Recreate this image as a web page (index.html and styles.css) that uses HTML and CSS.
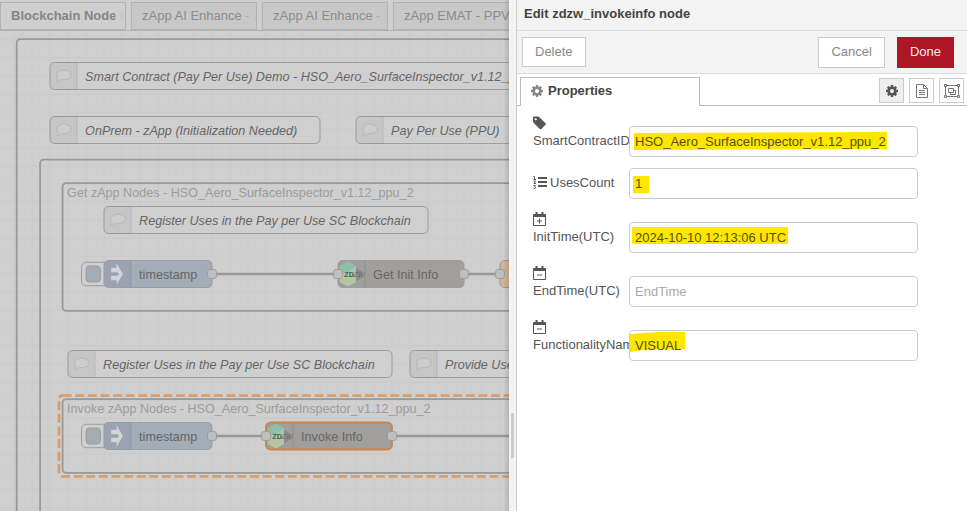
FILE: index.html
```html
<!DOCTYPE html>
<html lang="en">
<head>
<meta charset="utf-8">
<title>Flow editor</title>
<link rel="stylesheet" href="styles.css">
</head>
<body>
<svg class="defs" aria-hidden="true">
  <defs>
    <pattern id="grid" width="20" height="20" patternUnits="userSpaceOnUse">
      <path class="grid-line" d="M0 0V20M20 0V20M0 0H20M0 20H20"/>
    </pattern>
    <symbol id="bubble" viewBox="0 0 30 30" width="30" height="30">
      <path class="bubble" d="M15.500 8.500c4.500 0 8 2.300 8 5.300s-3.500 5.200-8 5.200c-1 0-1.900-.1-2.800-.3-1.500 1.500-3.400 2.500-5.700 2.800 1-1 1.900-2.100 2-3.800-1-1-1.500-2.400-1.500-3.900 0-3 3.500-5.300 8-5.300z"/>
    </symbol>
    <symbol id="inject" viewBox="0 0 30 30" width="30" height="30">
      <path class="arrow" d="M8 8h6V3l7 12-7 12v-5H8v-5h7l2-2-2-2H8z"/>
    </symbol>
    <symbol id="zdzw" viewBox="0 0 30 30" width="30" height="30">
      <path fill="#8d8b8c" d="M19 8l8 4v7l-8 5z"/>
      <path fill="#8fc0a6" d="M11 1l9 5v8L2 16V6z"/>
      <path fill="#a5c9b0" d="M20 6v11l-9-4z"/>
      <path fill="#b4c7a0" d="M2 16l9-3 9 4v7l-9 5-9-5z"/>
      <text class="logo-text" x="7" y="18">ZD</text>
      <text class="logo-text logo-dim" x="17" y="18">ZW</text>
    </symbol>
    <symbol id="cog" viewBox="0 -128 1536 1536">
      <path d="M1024 640q0-106-75-181t-181-75-181 75-75 181 75 181 181 75 181-75 75-181zm512-109v222q0 12-8 23t-20 13l-185 28q-19 54-39 91 35 50 107 138 10 12 10 25t-9 23q-27 37-99 108t-94 71q-12 0-26-9l-138-108q-44 23-91 38-16 136-29 186-7 28-36 28h-222q-14 0-24.500-8.500t-11.500-21.500l-28-184q-49-16-90-37l-141 107q-10 9-25 9-14 0-25-11-126-114-165-168-7-10-7-23 0-12 8-23 15-21 51-66.500t54-70.500q-27-50-41-99l-183-27q-13-2-21-12.500t-8-23.500v-222q0-12 8-23t19-13l186-28q14-46 39-92-40-57-107-138-10-12-10-24 0-10 9-23 26-36 98.500-107.500t94.500-71.500q13 0 26 10l138 107q44-23 91-38 16-136 29-186 7-28 36-28h222q14 0 24.500 8.500t11.500 21.500l28 184q49 16 90 37l142-107q9-9 24-9 13 0 25 10 129 119 165 170 7 8 7 22 0 12-8 23-15 21-51 66.500t-54 70.500q26 50 41 98l183 28q13 2 21 12.500t8 23.500z"/>
    </symbol>
    <symbol id="tag" viewBox="0 0 1536 1536">
      <path d="M448 320q0-53-37.500-90.500t-90.500-37.500-90.500 37.500-37.500 90.500 37.500 90.500 90.500 37.500 90.500-37.500 37.500-90.500zm1067 576q0 53-37 90l-491 492q-39 37-91 37-53 0-90-37l-715-716q-38-37-64.500-101t-26.500-117v-416q0-52 38-90t90-38h416q53 0 117 26.500t102 64.500l715 714q37 39 37 91z"/>
    </symbol>
    <symbol id="list" viewBox="0 0 14 14">
      <path d="M5 2h9v2H5zM5 6h9v2H5zM5 10h9v2H5z"/>
      <path class="thin" d="M0.500 1.500H1.500V4M0.500 4.500H3M0.500 6H2.500L1 8.500H3M0.500 10.500H2.500L1.500 11.500Q3 12 2.500 13T0.500 13"/>
    </symbol>
    <symbol id="calendar" viewBox="0 0 13 14">
      <path d="M1 2h1.500V0h2v2h4V0h2v2H12q1 0 1 1v10q0 1-1 1H1q-1 0-1-1V3q0-1 1-1zM1 5v8h11V5z"/>
      <path d="M4 8.500h5v1H4z"/>
    </symbol>
    <symbol id="plus-bar" viewBox="0 0 13 14"><path d="M6 6.500h1v5H6z"/></symbol>
    <symbol id="file" viewBox="0 0 12 14">
      <path class="thin" d="M0.500 0.500H7.500L11.500 4.500V13.500H0.500zM7.500 0.500V4.500H11.500M3 6.500H9M3 8.500H9M3 10.500H9"/>
    </symbol>
    <symbol id="group" viewBox="0 0 16 14">
      <path class="thin" d="M1.500 1.500H14.500V12.500H1.500zM4.500 4.500H9.500V8.500H4.500zM9.500 6.500H11.500V10.500H6.500V8.500"/>
      <path class="corner" d="M0.500 0.500h2v2h-2zM13.500 0.500h2v2h-2zM0.500 11.500h2v2h-2zM13.500 11.500h2v2h-2z"/>
    </symbol>
  </defs>
</svg>

<main class="workspace">
  <nav class="flow-tabs" aria-label="Flows">
    <a class="flow-tab active" href="#flow1">Blockchain Node E</a>
    <a class="flow-tab" href="#flow2">zApp AI Enhance - P</a>
    <a class="flow-tab" href="#flow3">zApp AI Enhance - P</a>
    <a class="flow-tab" href="#flow4">zApp EMAT - PPV</a>
  </nav>
  <svg class="canvas" role="img" aria-label="Flow canvas">
    <g transform="translate(14 9) scale(0.900)">
      <rect x="-20" y="-20" width="2000" height="2000" fill="url(#grid)"/>

      <rect class="group" x="3" y="-1" width="1200" height="1200" rx="4"/>
      <rect class="group" x="29" y="133" width="1100" height="1000" rx="4"/>
      <rect class="group" x="54" y="159" width="1000" height="142" rx="4"/>
      <rect class="selection" x="50" y="395" width="1008" height="90" rx="4"/>
      <rect class="group" x="54" y="399" width="1000" height="82" rx="4"/>
      <text class="group-title" x="59" y="174">Get zApp Nodes - HSO_Aero_SurfaceInspector_v1.12_ppu_2</text>
      <text class="group-title" x="59" y="414">Invoke zApp Nodes - HSO_Aero_SurfaceInspector_v1.12_ppu_2</text>

      <path class="wire" d="M220 260H360M500 260H540M220 440H280M420 440H700"/>

      <g transform="translate(40 25)">
        <rect class="node comment" width="560" height="30" rx="5"/>
        <path class="icon-area" d="M5 0H30V30H5Q0 30 0 25V5Q0 0 5 0"/><path class="divider" d="M30 0V30"/>
        <use href="#bubble"/>
        <text class="comment-text" x="39" y="20">Smart Contract (Pay Per Use) Demo - HSO_Aero_SurfaceInspector_v1.12_ppu_2</text>
      </g>
      <g transform="translate(40 85)">
        <rect class="node comment" width="300" height="30" rx="5"/>
        <path class="icon-area" d="M5 0H30V30H5Q0 30 0 25V5Q0 0 5 0"/><path class="divider" d="M30 0V30"/>
        <use href="#bubble"/>
        <text class="comment-text" x="39" y="20">OnPrem - zApp (Initialization Needed)</text>
      </g>
      <g transform="translate(380 85)">
        <rect class="node comment" width="240" height="30" rx="5"/>
        <path class="icon-area" d="M5 0H30V30H5Q0 30 0 25V5Q0 0 5 0"/><path class="divider" d="M30 0V30"/>
        <use href="#bubble"/>
        <text class="comment-text" x="39" y="20">Pay Per Use (PPU)</text>
      </g>
      <g transform="translate(100 185)">
        <rect class="node comment" width="360" height="30" rx="5"/>
        <path class="icon-area" d="M5 0H30V30H5Q0 30 0 25V5Q0 0 5 0"/><path class="divider" d="M30 0V30"/>
        <use href="#bubble"/>
        <text class="comment-text" x="39" y="20">Register Uses in the Pay per Use SC Blockchain</text>
      </g>
      <g transform="translate(60 345)">
        <rect class="node comment" width="360" height="30" rx="5"/>
        <path class="icon-area" d="M5 0H30V30H5Q0 30 0 25V5Q0 0 5 0"/><path class="divider" d="M30 0V30"/>
        <use href="#bubble"/>
        <text class="comment-text" x="39" y="20">Register Uses in the Pay per Use SC Blockchain</text>
      </g>
      <g transform="translate(440 345)">
        <rect class="node comment" width="300" height="30" rx="5"/>
        <path class="icon-area" d="M5 0H30V30H5Q0 30 0 25V5Q0 0 5 0"/><path class="divider" d="M30 0V30"/>
        <use href="#bubble"/>
        <text class="comment-text" x="39" y="20">Provide Use</text>
      </g>

      <g transform="translate(100 245)">
        <rect class="node comment" x="-25" y="2" width="32" height="26" rx="5"/>
        <rect class="node inject" x="-20" y="6" width="16" height="18" rx="4"/>
        <rect class="node inject" width="120" height="30" rx="5"/>
        <path class="icon-area inject-area" d="M5 0H30V30H5Q0 30 0 25V5Q0 0 5 0"/><path class="divider" d="M30 0V30"/>
        <use href="#inject"/>
        <text class="node-text" x="39" y="20">timestamp</text>
        <rect class="port" x="115" y="10" width="10" height="10" rx="3"/>
      </g>
      <g transform="translate(100 425)">
        <rect class="node comment" x="-25" y="2" width="32" height="26" rx="5"/>
        <rect class="node inject" x="-20" y="6" width="16" height="18" rx="4"/>
        <rect class="node inject" width="120" height="30" rx="5"/>
        <path class="icon-area inject-area" d="M5 0H30V30H5Q0 30 0 25V5Q0 0 5 0"/><path class="divider" d="M30 0V30"/>
        <use href="#inject"/>
        <text class="node-text" x="39" y="20">timestamp</text>
        <rect class="port" x="115" y="10" width="10" height="10" rx="3"/>
      </g>
      <g transform="translate(360 245)">
        <rect class="node info" width="140" height="30" rx="5"/>
        <path class="divider" d="M30 0V30"/>
        <use href="#zdzw"/>
        <text class="node-text" x="39" y="20">Get Init Info</text>
        <rect class="port" x="-5" y="10" width="10" height="10" rx="3"/>
        <rect class="port" x="135" y="10" width="10" height="10" rx="3"/>
      </g>
      <g transform="translate(280 425)">
        <rect class="node info" width="140" height="30" rx="5"/>
        <path class="divider" d="M30 0V30"/>
        <use href="#zdzw"/>
        <rect class="selected" width="140" height="30" rx="5"/>
        <text class="node-text" x="39" y="20">Invoke Info</text>
        <rect class="port" x="-5" y="10" width="10" height="10" rx="3"/>
        <rect class="port" x="135" y="10" width="10" height="10" rx="3"/>
      </g>
      <g transform="translate(540 245)">
        <rect class="node function" width="120" height="30" rx="5"/>
        <rect class="port" x="-5" y="10" width="10" height="10" rx="3"/>
      </g>
    </g>
  </svg>
</main>

<div class="separator"><span class="grip"></span></div>

<aside class="tray">
  <h1 class="tray-title">Edit zdzw_invokeinfo node</h1>
  <div class="toolbar">
    <button class="btn" type="button">Delete</button>
    <span class="spacer"></span>
    <button class="btn large" type="button">Cancel</button>
    <button class="btn large primary" type="button">Done</button>
  </div>
  <div class="tray-tabs">
    <a class="tray-tab" href="#properties"><svg class="icon tab-cog" aria-hidden="true"><use href="#cog"/></svg>Properties</a>
    <div class="tab-buttons">
      <button class="icon-btn on" type="button" aria-label="Properties"><svg class="icon" aria-hidden="true"><use href="#cog"/></svg></button>
      <button class="icon-btn" type="button" aria-label="Description"><svg class="icon file" aria-hidden="true"><use href="#file"/></svg></button>
      <button class="icon-btn" type="button" aria-label="Appearance"><svg class="icon wide" aria-hidden="true"><use href="#group"/></svg></button>
    </div>
  </div>
  <form class="form" id="properties">
    <div class="row">
      <label for="contract"><svg class="icon block" aria-hidden="true"><use href="#tag"/></svg>SmartContractID</label>
      <div class="field">
        <svg class="marker" aria-hidden="true"><path d="M5 7L258 6V23L5 24z"/></svg>
        <input class="marked" id="contract" type="text" value="HSO_Aero_SurfaceInspector_v1.12_ppu_2">
      </div>
    </div>
    <div class="row">
      <label for="uses"><svg class="icon list" aria-hidden="true"><use href="#list"/></svg>UsesCount</label>
      <div class="field">
        <svg class="marker" aria-hidden="true"><path d="M4 8H20V25H4z"/></svg>
        <input class="marked" id="uses" type="text" value="1">
      </div>
    </div>
    <div class="row">
      <label for="init"><svg class="icon block" aria-hidden="true"><use href="#calendar"/><use href="#plus-bar"/></svg>InitTime(UTC)</label>
      <div class="field">
        <svg class="marker" aria-hidden="true"><path d="M3 5H159V22H3z"/></svg>
        <input class="marked" id="init" type="text" value="2024-10-10 12:13:06 UTC">
      </div>
    </div>
    <div class="row">
      <label for="end"><svg class="icon block" aria-hidden="true"><use href="#calendar"/></svg>EndTime(UTC)</label>
      <div class="field">
        <input id="end" type="text" placeholder="EndTime">
      </div>
    </div>
    <div class="row">
      <label for="func"><svg class="icon block" aria-hidden="true"><use href="#calendar"/></svg>FunctionalityName</label>
      <div class="field">
        <svg class="marker" aria-hidden="true"><path d="M1 4L30 2H56V19L16 20L1 22z"/></svg>
        <input class="marked" id="func" type="text" value="VISUAL">
      </div>
    </div>
  </form>
</aside>
</body>
</html>
```
FILE: styles.css
```css
* { box-sizing: border-box; }

body {
  margin: 0;
  min-height: 100vh;
  display: grid;
  grid-template-columns: minmax(0, 1fr) 8px 450px;
  font: 13px/18px "Liberation Sans", Arial, sans-serif;
  color: #555;
  background: #fff;
}

.defs { position: absolute; width: 0; height: 0; }

/* Workspace */
.workspace {
  position: relative;
  display: flex;
  flex-direction: column;
  overflow: hidden;
  background: #cfcfcf;
}
.workspace::after {
  content: "";
  position: absolute;
  inset: 0 0 0 auto;
  width: 6px;
  background: linear-gradient(to right, transparent, rgba(0, 0, 0, 0.12));
}
.flow-tabs {
  display: flex;
  gap: 5px;
  padding-top: 2px;
  border-bottom: 1px solid #b3b3b3;
}
.flow-tab {
  position: relative;
  flex: 0 0 126px;
  height: 28px;
  padding: 4px 0 0 10px;
  overflow: hidden;
  white-space: nowrap;
  border: 1px solid #b3b3b3;
  background: #c8c8c8;
  color: #8c8c8c;
  text-decoration: none;
}
.flow-tab::after {
  content: "";
  position: absolute;
  inset: 0 0 0 auto;
  width: 10px;
  background: linear-gradient(to right, rgba(200, 200, 200, 0.5), #c8c8c8);
}
.flow-tab:last-child::after { display: none; }
.flow-tab.active {
  background: #cfcfcf;
  color: #858585;
  font-weight: bold;
}
.flow-tab.active::after {
  background: linear-gradient(to right, rgba(207, 207, 207, 0.5), #cfcfcf);
}
.canvas { flex: 1; width: 100%; min-height: 0; display: block; }

.grid-line { stroke: #c8c8c8; stroke-width: 1; fill: none; }
.group { fill: none; stroke: #999; stroke-width: 2; }
.selection { fill: none; stroke: #d79c68; stroke-width: 3; stroke-dasharray: 10 4; }
.wire { stroke: #999; stroke-width: 3; fill: none; }
.node { stroke: #999; stroke-width: 1; }
.comment { fill: #cfcfcf; }
.inject { fill: #a2adb8; }
.info { fill: #a09f9d; }
.function { fill: #d2b496; }
.icon-area { fill: #000; fill-opacity: 0.04; }
.inject-area { fill: #9a9fb0; fill-opacity: 0.8; }
.divider { stroke: #000; stroke-opacity: 0.1; }
.port { fill: #bfbfbf; stroke: #999; }
.selected { fill: none; stroke: #cf8544; stroke-width: 2; }
.bubble { fill: #cdcdcd; stroke: #b5b5b5; stroke-width: 1; }
.arrow { fill: #d3d3d3; }
.canvas text { font-size: 14px; }
.group-title { fill: #9c9c9c; }
.comment-text { fill: #666; font-style: italic; }
.node-text { fill: #666; }
.defs .logo-text { font-size: 8px; font-weight: bold; fill: #4c5c50; }
.defs .logo-dim { fill: #6c6c6c; font-style: italic; font-weight: normal; }

/* Separator */
.separator {
  display: flex;
  align-items: center;
  justify-content: center;
  padding-top: 360px;
  background: #f3f3f3;
  border-right: 1px solid #ccc;
}
.grip { width: 3px; height: 45px; background: #ccc; }

/* Edit tray */
.tray { background: #fff; }
.tray-title {
  margin: 0;
  padding: 5px 7px 7px;
  font-size: 13px;
  line-height: 18px;
  color: #444;
  background: #f3f3f3;
  border-bottom: 1px solid #ddd;
}
.toolbar {
  display: flex;
  align-items: center;
  gap: 12px;
  height: 43px;
  padding: 0 13px 0 5px;
  background: #f3f3f3;
  border-bottom: 1px solid #ddd;
}
.spacer { flex: 1; }
.btn {
  height: 30px;
  padding: 0 12px;
  font: inherit;
  color: #888;
  background: #fff;
  border: 1px solid #ccc;
}
.btn.large { height: 31px; padding: 0 12px; }
.btn.primary { color: #eee; background: #ad1625; border-color: #ad1625; }

.tray-tabs {
  display: flex;
  justify-content: space-between;
  height: 32px;
  padding: 3px 3px 0;
  border-bottom: 1px solid #bbb;
}
.tray-tab {
  display: flex;
  align-items: center;
  gap: 5px;
  width: 180px;
  height: 29px;
  padding: 0 10px 2px;
  font-weight: bold;
  color: #444;
  text-decoration: none;
  background: #fff;
  border: 1px solid #bbb;
  border-bottom: 0;
}
.tab-buttons { display: flex; gap: 5px; padding-top: 1px; }
.icon-btn {
  display: grid;
  place-items: center;
  width: 25px;
  height: 25px;
  padding: 0;
  color: #777;
  background: #fff;
  border: 1px solid #ccc;
}
.icon-btn.on { color: #555; background: #eee; }

.icon { width: 12px; height: 12px; fill: currentColor; }
.tab-cog { color: #888; }
.icon.file { width: 12px; height: 14px; }
.icon.wide { width: 16px; height: 14px; }
.thin { fill: none; stroke: currentColor; stroke-width: 1; }
.corner { fill: #fff; stroke: currentColor; stroke-width: 1; }

.form { display: grid; gap: 11px; padding: 8px 49px 20px 16px; }
.row { display: flex; align-items: flex-end; }
.row label {
  flex: 0 0 96px;
  padding-bottom: 7px;
  overflow: hidden;
  white-space: nowrap;
}
.icon.block { display: block; width: 13px; height: 14px; margin: 2px 0; }
.icon.list { width: 14px; height: 14px; margin-right: 3px; vertical-align: -2px; }
.field { position: relative; flex: 1; height: 31px; }
.marker { position: absolute; inset: 0; width: 100%; height: 100%; fill: #ffe600; }
.field input {
  position: relative;
  display: block;
  width: 100%;
  height: 31px;
  padding: 0 5px;
  font: inherit;
  color: #555;
  background: transparent;
  border: 1px solid #ccc;
  border-radius: 4px;
}
.field input.marked { color: #565000; }
.field input::placeholder { color: #aaa; opacity: 1; }
```
